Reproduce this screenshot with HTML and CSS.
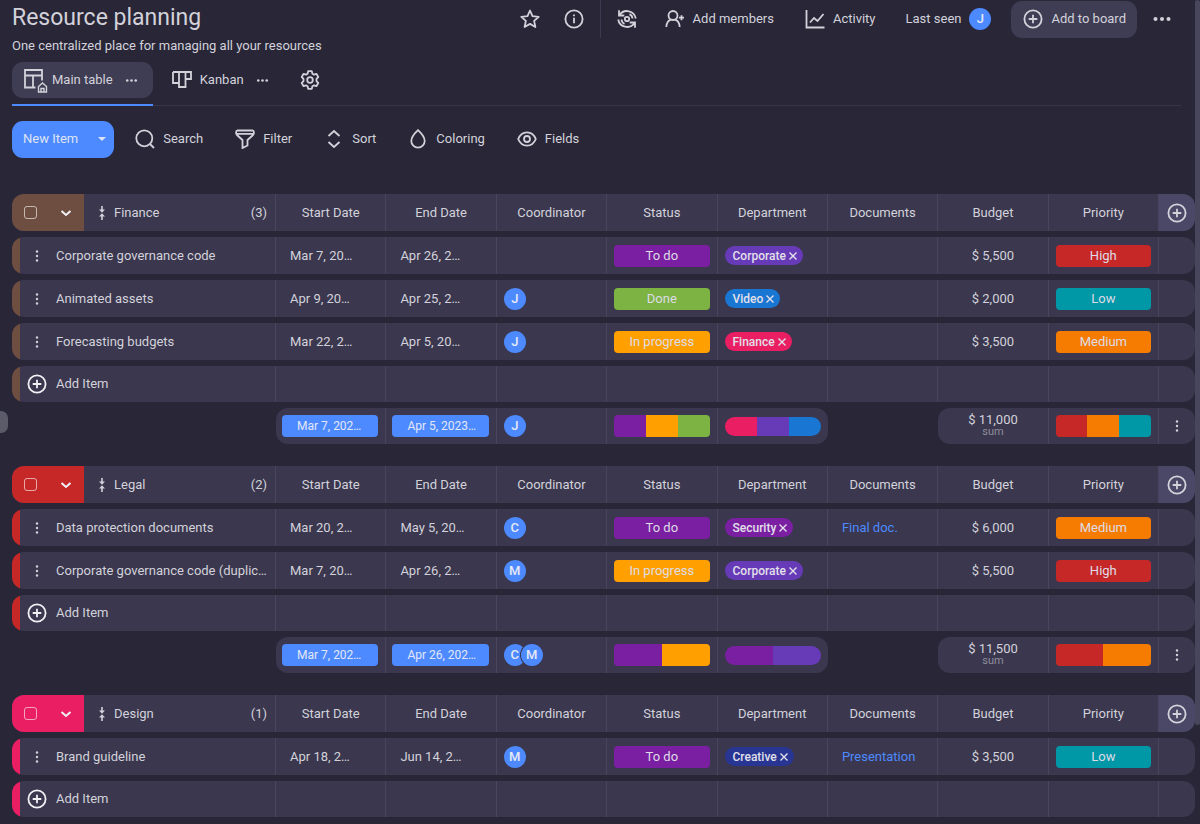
FILE: index.html
```html
<!DOCTYPE html>
<html lang="en">
<head>
<meta charset="utf-8">
<title>Resource planning</title>
<link rel="stylesheet" href="styles.css">
</head>
<body>
<svg class="sprite" aria-hidden="true">
  <symbol id="star" viewBox="0 0 20 20"><path stroke-linejoin="round" d="M10 1.500l2.500 5.700 6.200.600-4.600 4.100 1.300 6.100L10 14.900l-5.400 3.100 1.300-6.100L1.300 7.800l6.200-.600z"/></symbol>
  <symbol id="info" viewBox="0 0 20 20"><circle cx="10" cy="10" r="8.600"/><path d="M10 8.800v5.400M10 5.500v1.800"/></symbol>
  <symbol id="sync" viewBox="0 0 20 20"><circle cx="10" cy="10" r="2.200"/><path d="M2 1.200v5.300h5.300M2.500 6A9 9 0 0 1 18.800 9.500M18 18.800v-5.300h-5.300M17.500 14A9 9 0 0 1 1.200 10.500M4.500 10.500a5.500 5.500 0 0 0 3 4.400M15.500 9.500a5.500 5.500 0 0 0-3-4.400"/></symbol>
  <symbol id="user" viewBox="0 0 20 20"><circle cx="8" cy="6.500" r="4.500"/><path d="M1.300 18c.3-4 2.300-6.800 5-7.300M14.700 18c-.3-4-2.300-6.800-5-7.300M16.500 6.200v5M14 8.700h5"/></symbol>
  <symbol id="chart" viewBox="0 0 20 20"><path d="M1.500 1v17.500H19.500M5 13.500l4-4.500 3.500 3L18.500 5"/></symbol>
  <symbol id="plus" viewBox="0 0 20 20"><circle cx="10" cy="10" r="8.600"/><path d="M10 5.700v8.600M5.700 10h8.600"/></symbol>
  <symbol id="dots" viewBox="0 0 20 20"><g class="solid"><circle cx="3.500" cy="10" r="2"/><circle cx="10" cy="10" r="2"/><circle cx="16.500" cy="10" r="2"/></g></symbol>
  <symbol id="vdots" viewBox="0 0 12 12"><g class="solid"><circle cx="6" cy="1.500" r="1.200"/><circle cx="6" cy="6" r="1.200"/><circle cx="6" cy="10.500" r="1.200"/></g></symbol>
  <symbol id="table" viewBox="0 0 25 25"><path d="M12.500 19.500H2V2h17v10.500M2 7.500h17M10 7.500v12"/><path class="fine" d="M15.500 24v-5.500l4-3.500 4 3.500V24zM18 24v-3.500h3V24"/></symbol>
  <symbol id="kanban" viewBox="0 0 20 20"><path d="M1 2h18v7h-5.500M1 2v11h6M7 2v15h6.500V2"/></symbol>
  <symbol id="gear" viewBox="0 0 20 20"><circle cx="10" cy="10" r="2.800"/><path stroke-linejoin="round" d="M8.200 1.200h3.600l.6 2.500 1.600.9 2.400-.8 1.900 3.200-1.800 1.800v2.400l1.800 1.800-1.900 3.200-2.400-.8-1.600.9-.6 2.500H8.200l-.6-2.500-1.600-.9-2.400.8-1.900-3.200 1.800-1.800V8.800L1.700 7l1.900-3.200 2.400.8 1.600-.9z"/></symbol>
  <symbol id="search" viewBox="0 0 20 20"><circle cx="9.300" cy="9.300" r="8"/><path d="M15 15l4 4"/></symbol>
  <symbol id="filter" viewBox="0 0 20 20"><path d="M2.500 1.500h15c1.800 0 1.800 3 .5 4.500L12.500 11v5.500L7.500 19v-8L2 6C.7 4.500.7 1.500 2.500 1.500zM1.500 4.800h17"/></symbol>
  <symbol id="sort" viewBox="0 0 20 20"><path d="M4.500 7L10 2l5.500 5M4.500 13l5.500 5 5.500-5"/></symbol>
  <symbol id="drop" viewBox="0 0 20 20"><path d="M10 1.200C7 4 3.300 8 3.300 12a6.700 6.700 0 0 0 13.400 0C16.700 8 13 4 10 1.200z"/></symbol>
  <symbol id="eye" viewBox="0 0 20 20"><path d="M1.200 10C3 5.500 6.300 3.300 10 3.300S17 5.500 18.800 10C17 14.500 13.700 16.700 10 16.700S3 14.500 1.200 10z"/><circle cx="10" cy="10" r="3"/></symbol>
  <symbol id="chevron" viewBox="0 0 12 12"><path d="M1.500 4L6 8l4.500-4"/></symbol>
  <symbol id="drag" viewBox="0 0 12 14"><g class="solid"><path d="M5.200 0h1.600v3.500H9L6 6.700 3 3.500h2.200zM5.200 14h1.600v-3.500H9L6 7.300 3 10.500h2.200z"/></g></symbol>
  <symbol id="cross" viewBox="0 0 10 10"><path d="M1.500 1.500l7 7M8.500 1.500l-7 7"/></symbol>
</svg>

<div class="app">
  <div class="scroll-thumb"></div>
  <button class="side-handle" aria-label="Open sidebar"></button>

  <header class="topbar">
    <div class="heading">
      <h1>Resource planning</h1>
      <p>One centralized place for managing all your resources</p>
    </div>
    <div class="actions">
      <button class="icon-btn" aria-label="Favorite"><svg class="ico"><use href="#star"/></svg></button>
      <button class="icon-btn" aria-label="Info"><svg class="ico"><use href="#info"/></svg></button>
      <span class="divider"></span>
      <button class="icon-btn sync" aria-label="Automations"><svg class="ico"><use href="#sync"/></svg></button>
      <button class="text-btn"><svg class="ico"><use href="#user"/></svg>Add members</button>
      <button class="text-btn"><svg class="ico"><use href="#chart"/></svg>Activity</button>
      <span class="seen">Last seen <span class="avatar">J</span></span>
      <button class="text-btn board-btn"><svg class="ico"><use href="#plus"/></svg>Add to board</button>
      <button class="icon-btn" aria-label="More"><svg class="ico"><use href="#dots"/></svg></button>
    </div>
  </header>

  <nav class="tabs">
    <div class="tab active"><button class="tab-name"><svg class="ico large"><use href="#table"/></svg>Main table</button><button class="tab-more" aria-label="Main table options"><svg class="ico tiny"><use href="#dots"/></svg></button></div>
    <div class="tab"><button class="tab-name"><svg class="ico"><use href="#kanban"/></svg>Kanban</button><button class="tab-more" aria-label="Kanban options"><svg class="ico tiny"><use href="#dots"/></svg></button></div>
    <button class="icon-btn settings" aria-label="Settings"><svg class="ico"><use href="#gear"/></svg></button>
  </nav>

  <div class="toolbar">
    <button class="new-item">New Item<span class="caret"></span></button>
    <button class="text-btn"><svg class="ico"><use href="#search"/></svg>Search</button>
    <button class="text-btn"><svg class="ico"><use href="#filter"/></svg>Filter</button>
    <button class="text-btn"><svg class="ico"><use href="#sort"/></svg>Sort</button>
    <button class="text-btn"><svg class="ico"><use href="#drop"/></svg>Coloring</button>
    <button class="text-btn"><svg class="ico"><use href="#eye"/></svg>Fields</button>
  </div>

  <main class="board">
    <table class="group brown">
      <colgroup><col class="c-name"><col span="8"><col class="c-end"></colgroup>
      <thead><tr>
        <th><div class="group-head"><span class="group-tools"><input type="checkbox" aria-label="Select Finance"><button aria-label="Collapse Finance"><svg class="ico chev"><use href="#chevron"/></svg></button></span><svg class="ico drag"><use href="#drag"/></svg><span class="group-name">Finance</span><span class="count">(3)</span></div></th>
        <th>Start Date</th><th>End Date</th><th>Coordinator</th><th>Status</th><th>Department</th><th>Documents</th><th>Budget</th><th>Priority</th>
        <th class="add-col"><button aria-label="Add column"><svg class="ico"><use href="#plus"/></svg></button></th>
      </tr></thead>
      <tbody>
        <tr><td><div class="item"><button aria-label="Item menu"><svg class="ico dots3"><use href="#vdots"/></svg></button><span>Corporate governance code</span></div></td><td class="date">Mar 7, 20…</td><td class="date">Apr 26, 2…</td><td></td><td><span class="badge purple">To do</span></td><td><span class="tag violet">Corporate<button aria-label="Remove Corporate"><svg class="ico x"><use href="#cross"/></svg></button></span></td><td></td><td class="num">$ 5,500</td><td><span class="badge red">High</span></td><td></td></tr>
        <tr><td><div class="item"><button aria-label="Item menu"><svg class="ico dots3"><use href="#vdots"/></svg></button><span>Animated assets</span></div></td><td class="date">Apr 9, 20…</td><td class="date">Apr 25, 2…</td><td><span class="avatar">J</span></td><td><span class="badge green">Done</span></td><td><span class="tag blue">Video<button aria-label="Remove Video"><svg class="ico x"><use href="#cross"/></svg></button></span></td><td></td><td class="num">$ 2,000</td><td><span class="badge teal">Low</span></td><td></td></tr>
        <tr><td><div class="item"><button aria-label="Item menu"><svg class="ico dots3"><use href="#vdots"/></svg></button><span>Forecasting budgets</span></div></td><td class="date">Mar 22, 2…</td><td class="date">Apr 5, 20…</td><td><span class="avatar">J</span></td><td><span class="badge amber">In progress</span></td><td><span class="tag pink">Finance<button aria-label="Remove Finance"><svg class="ico x"><use href="#cross"/></svg></button></span></td><td></td><td class="num">$ 3,500</td><td><span class="badge orange">Medium</span></td><td></td></tr>
        <tr class="add-row"><td><button class="item add"><svg class="ico"><use href="#plus"/></svg><span>Add Item</span></button></td><td></td><td></td><td></td><td></td><td></td><td></td><td></td><td></td><td></td></tr>
      </tbody>
      <tfoot><tr>
        <td class="blank"></td><td class="first"><span class="range">Mar 7, 202…</span></td><td><span class="range">Apr 5, 2023…</span></td><td><span class="avatar">J</span></td>
        <td><span class="split"><i class="purple"></i><i class="amber"></i><i class="green"></i></span></td>
        <td class="last"><span class="split round"><i class="pink"></i><i class="violet"></i><i class="blue"></i></span></td>
        <td class="blank"></td><td class="first total">$ 11,000<small>sum</small></td>
        <td><span class="split"><i class="red"></i><i class="orange"></i><i class="teal"></i></span></td>
        <td class="menu"><button aria-label="Summary menu"><svg class="ico dots3"><use href="#vdots"/></svg></button></td>
      </tr></tfoot>
    </table>

    <table class="group crimson">
      <colgroup><col class="c-name"><col span="8"><col class="c-end"></colgroup>
      <thead><tr>
        <th><div class="group-head"><span class="group-tools"><input type="checkbox" aria-label="Select Legal"><button aria-label="Collapse Legal"><svg class="ico chev"><use href="#chevron"/></svg></button></span><svg class="ico drag"><use href="#drag"/></svg><span class="group-name">Legal</span><span class="count">(2)</span></div></th>
        <th>Start Date</th><th>End Date</th><th>Coordinator</th><th>Status</th><th>Department</th><th>Documents</th><th>Budget</th><th>Priority</th>
        <th class="add-col"><button aria-label="Add column"><svg class="ico"><use href="#plus"/></svg></button></th>
      </tr></thead>
      <tbody>
        <tr><td><div class="item"><button aria-label="Item menu"><svg class="ico dots3"><use href="#vdots"/></svg></button><span>Data protection documents</span></div></td><td class="date">Mar 20, 2…</td><td class="date">May 5, 20…</td><td><span class="avatar">C</span></td><td><span class="badge purple">To do</span></td><td><span class="tag purple">Security<button aria-label="Remove Security"><svg class="ico x"><use href="#cross"/></svg></button></span></td><td class="date"><a href="#">Final doc.</a></td><td class="num">$ 6,000</td><td><span class="badge orange">Medium</span></td><td></td></tr>
        <tr><td><div class="item"><button aria-label="Item menu"><svg class="ico dots3"><use href="#vdots"/></svg></button><span>Corporate governance code (duplic…</span></div></td><td class="date">Mar 7, 20…</td><td class="date">Apr 26, 2…</td><td><span class="avatar">M</span></td><td><span class="badge amber">In progress</span></td><td><span class="tag violet">Corporate<button aria-label="Remove Corporate"><svg class="ico x"><use href="#cross"/></svg></button></span></td><td></td><td class="num">$ 5,500</td><td><span class="badge red">High</span></td><td></td></tr>
        <tr class="add-row"><td><button class="item add"><svg class="ico"><use href="#plus"/></svg><span>Add Item</span></button></td><td></td><td></td><td></td><td></td><td></td><td></td><td></td><td></td><td></td></tr>
      </tbody>
      <tfoot><tr>
        <td class="blank"></td><td class="first"><span class="range">Mar 7, 202…</span></td><td><span class="range">Apr 26, 202…</span></td><td><span class="people"><span class="avatar">C</span><span class="avatar">M</span></span></td>
        <td><span class="split"><i class="purple"></i><i class="amber"></i></span></td>
        <td class="last"><span class="split round"><i class="purple"></i><i class="violet"></i></span></td>
        <td class="blank"></td><td class="first total">$ 11,500<small>sum</small></td>
        <td><span class="split"><i class="red"></i><i class="orange"></i></span></td>
        <td class="menu"><button aria-label="Summary menu"><svg class="ico dots3"><use href="#vdots"/></svg></button></td>
      </tr></tfoot>
    </table>

    <table class="group rose">
      <colgroup><col class="c-name"><col span="8"><col class="c-end"></colgroup>
      <thead><tr>
        <th><div class="group-head"><span class="group-tools"><input type="checkbox" aria-label="Select Design"><button aria-label="Collapse Design"><svg class="ico chev"><use href="#chevron"/></svg></button></span><svg class="ico drag"><use href="#drag"/></svg><span class="group-name">Design</span><span class="count">(1)</span></div></th>
        <th>Start Date</th><th>End Date</th><th>Coordinator</th><th>Status</th><th>Department</th><th>Documents</th><th>Budget</th><th>Priority</th>
        <th class="add-col"><button aria-label="Add column"><svg class="ico"><use href="#plus"/></svg></button></th>
      </tr></thead>
      <tbody>
        <tr><td><div class="item"><button aria-label="Item menu"><svg class="ico dots3"><use href="#vdots"/></svg></button><span>Brand guideline</span></div></td><td class="date">Apr 18, 2…</td><td class="date">Jun 14, 2…</td><td><span class="avatar">M</span></td><td><span class="badge purple">To do</span></td><td><span class="tag navy">Creative<button aria-label="Remove Creative"><svg class="ico x"><use href="#cross"/></svg></button></span></td><td class="date"><a href="#">Presentation</a></td><td class="num">$ 3,500</td><td><span class="badge teal">Low</span></td><td></td></tr>
        <tr class="add-row"><td><button class="item add"><svg class="ico"><use href="#plus"/></svg><span>Add Item</span></button></td><td></td><td></td><td></td><td></td><td></td><td></td><td></td><td></td><td></td></tr>
      </tbody>
    </table>
  </main>
</div>
</body>
</html>
```
FILE: styles.css
```css
:root {
  --bg: #282637;
  --row: #3a374e;
  --raised: #3f3d54;
  --line: #474560;
  --text: #d3d2da;
  --accent: #4d8aff;
}

* { box-sizing: border-box; }

body {
  margin: 0;
  background: var(--bg);
  color: var(--text);
  font: 13px/18px Roboto, "Liberation Sans", sans-serif;
}

button {
  display: flex;
  align-items: center;
  padding: 0;
  border: 0;
  background: none;
  color: inherit;
  font: inherit;
  white-space: nowrap;
  cursor: pointer;
}

.sprite { display: none; }

.ico {
  flex: none;
  width: 20px;
  height: 20px;
  fill: none;
  stroke: currentColor;
  stroke-width: 1.8;
}
.solid { fill: currentColor; stroke: none; }
.fine { stroke-width: 1.4; }
.ico.large { width: 25px; height: 25px; }
.ico.tiny { width: 13px; height: 13px; }
.ico.chev { width: 12px; height: 12px; stroke-width: 2; color: #f0f0f5; }
.ico.drag { width: 12px; height: 14px; }
.ico.dots3 { width: 12px; height: 12px; }
.ico.x { width: 10px; height: 10px; stroke-width: 1.4; }

.app {
  position: relative;
  height: 100vh;
  overflow: hidden;
  padding: 0 5px 0 12px;
}

.scroll-thumb {
  position: absolute;
  top: 0;
  right: 0;
  width: 5px;
  height: 88%;
  border-radius: 3px;
  background: #48465d;
}

.side-handle {
  position: absolute;
  top: 411px;
  left: 0;
  width: 8px;
  height: 22px;
  border-radius: 0 7px 7px 0;
  background: #5c5b69;
}

.topbar {
  display: flex;
  justify-content: space-between;
  height: 62px;
  padding-right: 23px;
}
h1 {
  margin: 4px 0 5px;
  font-size: 23px;
  line-height: 28px;
  font-weight: 400;
}
.heading p { margin: 0; }

.actions { display: flex; align-items: center; height: 38px; }
.actions .icon-btn + .icon-btn { margin-left: 24px; }
.divider { width: 1px; height: 38px; margin: 0 16px; background: #3c3a50; }
.text-btn { gap: 8px; }
.actions .text-btn { margin-left: 28px; }
.actions .text-btn + .text-btn { margin-left: 31px; }
.seen { display: flex; align-items: center; gap: 8px; margin-left: 30px; }
.actions .board-btn {
  height: 37px;
  margin: 0 15px 0 20px;
  padding: 0 11px 0 12px;
  border-radius: 11px;
  background: var(--raised);
}

.avatar {
  display: flex;
  align-items: center;
  justify-content: center;
  width: 22px;
  height: 22px;
  border-radius: 50%;
  background: var(--accent);
  color: #e6e9f5;
  font-weight: 500;
}
.people { display: flex; }
.people .avatar + .avatar { margin-left: -5px; box-shadow: 0 0 0 1px var(--row); }

.tabs {
  display: flex;
  height: 44px;
  margin-right: 14px;
  border-bottom: 1px solid #37354a;
}
.tab {
  display: flex;
  align-items: flex-start;
  height: 44px;
}
.tab button { height: 36px; }
.tab-name { gap: 8px; }
.tab-more { margin-left: 12px; }
.tab.active {
  border-bottom: 2px solid var(--accent);
}
.tab.active .tab-name {
  gap: 4px;
  padding-left: 11px;
  border-radius: 11px 0 0 11px;
  background: var(--raised);
}
.tab.active .tab-more {
  margin-left: 0;
  padding: 0 15px 0 12px;
  border-radius: 0 11px 11px 0;
  background: var(--raised);
}
.tab + .tab { margin-left: 19px; }
.settings { height: 36px; margin-left: 31px; }

.toolbar { display: flex; align-items: center; gap: 32px; margin-top: 15px; }
.new-item {
  gap: 20px;
  height: 37px;
  padding: 0 8px 2px 11px;
  border-radius: 11px;
  background: var(--accent);
  color: #dfe4f5;
}
.toolbar .text-btn { padding-bottom: 1px; }
.new-item + .text-btn { margin-left: -11px; }
.caret {
  border: 4px solid transparent;
  border-top-color: currentColor;
  border-bottom: 0;
}

.board { display: grid; gap: 10px; margin-top: 30px; }

.group {
  width: 100%;
  table-layout: fixed;
  border-collapse: separate;
  border-spacing: 0 6px;
}
.brown { --group: #6f4e42; }
.crimson { --group: #c62828; }
.rose { --group: #e91e63; }
.c-name { width: 264px; }
.c-end { width: 36px; }

th, td {
  height: 37px;
  padding: 0 7px;
  border-right: 1px solid var(--line);
  background: var(--row);
  white-space: nowrap;
}
.add-row td, tfoot td { height: 36px; }
th { font-weight: 400; text-align: center; }
th:first-child, td:first-child { padding: 0; border-radius: 12px 0 0 12px; overflow: hidden; }
th:last-child, td:last-child { border-right: 0; border-radius: 0 12px 12px 0; }
tbody td:first-child { background: linear-gradient(to right, var(--group) 8px, var(--row) 8px); }
td.date { padding-left: 14px; }
td.num { text-align: center; }
a { color: var(--accent); text-decoration: none; }

.group-head { display: flex; align-items: center; height: 37px; padding-right: 8px; }
.group-tools {
  display: flex;
  align-items: center;
  justify-content: space-between;
  width: 72px;
  height: 37px;
  margin-right: 12px;
  padding: 0 12px;
  background: var(--group);
}
.group-name { margin-left: 6px; }
.count { margin-left: auto; }
input[type="checkbox"] {
  appearance: none;
  width: 13px;
  height: 13px;
  margin: 0;
  border: 1px solid rgb(255 255 255 / 60%);
  border-radius: 3px;
}
th.add-col { padding: 0; background: #4a4866; }
.add-col button, .menu button { justify-content: center; width: 100%; }
td.menu { padding: 0; }

.item { display: flex; align-items: center; gap: 13px; padding-left: 19px; }
button.item { padding-left: 15px; gap: 9px; }
.item.add .ico { color: #f0f0f5; }

.badge {
  display: block;
  height: 22px;
  border-radius: 4px;
  color: #dedce6;
  line-height: 21px;
  text-align: center;
}
.range {
  display: block;
  height: 22px;
  margin-left: -1px;
  padding-left: 15px;
  border-radius: 4px;
  background: var(--accent);
  color: #e2e7f7;
  font-size: 12px;
  line-height: 22px;
}
.tag {
  display: inline-flex;
  align-items: center;
  gap: 2px;
  height: 19px;
  padding: 0 5px 0 8px;
  border-radius: 10px;
  color: #e2e0ea;
  font-size: 12px;
  font-weight: 500;
  vertical-align: middle;
}
.split { display: flex; height: 22px; border-radius: 4px; overflow: hidden; }
.split.round { height: 19px; border-radius: 10px; }
.split i { flex: 1; }

.purple { background: #7b1fa2; }
.violet { background: #673ab7; }
.blue { background: #1976d2; }
.pink { background: #e91e63; }
.navy { background: #283593; }
.green { background: #7cb342; }
.amber { background: #ffa000; }
.orange { background: #f57c00; }
.red { background: #c62828; }
.teal { background: #0097a7; }

tfoot td.blank, tfoot td:first-child { border-right: 0; background: none; }
tfoot td.first { border-radius: 12px 0 0 12px; }
tfoot td.last { border-right: 0; border-radius: 0 12px 12px 0; }
td.total { text-align: center; line-height: 12px; }
small { display: block; color: #908e9c; font-size: 11px; line-height: 12px; }
```
